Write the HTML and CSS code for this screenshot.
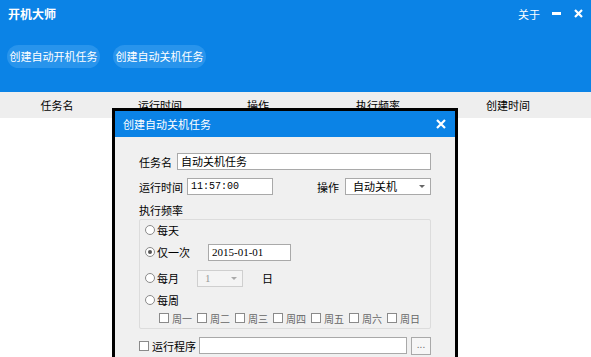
FILE: index.html
```html
<!DOCTYPE html>
<html lang="zh-CN">
<head>
  <meta charset="UTF-8">
  <title>开机大师</title>
  <link rel="stylesheet" href="styles.css">
</head>
<body>

  <!-- top bar -->
  <div class="app-top">
    <div class="title-row">
      <span class="app-name">开机大师</span>
      <div class="win-ctrl">
        <span class="about">关于</span>
        <span class="min-btn"></span>
        <svg class="close-btn" width="9" height="9" viewBox="0 0 9 9"><path d="M1 1L8 8M8 1L1 8" stroke="#fff" stroke-width="2.2"/></svg>
      </div>
    </div>
    <div class="action-row">
      <span class="pill">创建自动开机任务</span>
      <span class="pill">创建自动关机任务</span>
    </div>
  </div>

  <!-- task table header -->
  <div class="table-head">
    <span>任务名</span>
    <span>运行时间</span>
    <span>操作</span>
    <span>执行频率</span>
    <span>创建时间</span>
  </div>

  <!-- dialog -->
  <div class="dialog">
    <div class="dlg-title">
      <span>创建自动关机任务</span>
      <svg class="dlg-close" width="10" height="10" viewBox="0 0 10 10"><path d="M1 1L9 9M9 1L1 9" stroke="#fff" stroke-width="2.2"/></svg>
    </div>
    <div class="dlg-body">
      <div class="row">
        <label class="lbl name-lbl">任务名</label>
        <div class="field name-field">自动关机任务</div>
      </div>
      <div class="row row-time">
        <label class="lbl time-lbl">运行时间</label>
        <div class="field time-field">11:57:00</div>
        <label class="lbl op-lbl">操作</label>
        <div class="field select op-select">自动关机<span class="arrow"></span></div>
      </div>
      <div class="freq-lbl">执行频率</div>
      <div class="group">
        <div class="opt opt-day"><span class="radio"></span>每天</div>
        <div class="opt opt-once"><span class="radio on"></span>仅一次<div class="field date-field">2015-01-01</div></div>
        <div class="opt opt-month"><span class="radio"></span>每月<div class="field select day-select disabled">1<span class="arrow"></span></div><span class="day">日</span></div>
        <div class="opt opt-week"><span class="radio"></span>每周</div>
        <div class="weekdays">
          <span class="wd"><span class="check"></span>周一</span>
          <span class="wd"><span class="check"></span>周二</span>
          <span class="wd"><span class="check"></span>周三</span>
          <span class="wd"><span class="check"></span>周四</span>
          <span class="wd"><span class="check"></span>周五</span>
          <span class="wd"><span class="check"></span>周六</span>
          <span class="wd"><span class="check"></span>周日</span>
        </div>
      </div>
      <div class="row row-prog">
        <span class="check"></span>
        <label class="lbl prog-lbl">运行程序</label>
        <div class="field prog-field"></div>
        <div class="browse">...</div>
      </div>
    </div>
  </div>

</body>
</html>
```

FILE: styles.css
```css
body {
  margin: 0;
  width: 591px;
  height: 357px;
  overflow: hidden;
  background: #fff;
  font-family: "Microsoft YaHei", "Noto Sans CJK SC", sans-serif;
  font-size: 11px;
  color: #000;
  position: relative;
  white-space: nowrap;
}

.app-top {
  height: 92px;
  background: #0b83e6;
  color: #fff;
}

.title-row {
  display: flex;
  justify-content: space-between;
  align-items: center;
  height: 27px;
  padding: 0 8px 0 8px;
}

.app-name {
  font-size: 12px;
  font-weight: bold;
}

.win-ctrl {
  display: flex;
  align-items: center;
}

.about {
  margin-right: 12px;
}

.min-btn {
  width: 9px;
  height: 3px;
  background: #fff;
  margin-right: 13px;
}

.action-row {
  display: flex;
  gap: 13px;
  padding: 18px 0 0 7px;
}

.pill {
  box-sizing: border-box;
  background: #2894ec;
  border-radius: 12px;
  height: 23px;
  line-height: 23px;
  width: 93px;
  text-align: center;
}

.table-head {
  display: grid;
  grid-template-columns: 114px 92px 104px 136px 124px;
  height: 26px;
  line-height: 26px;
  background: #eeeeee;
  text-align: center;
}

.dialog {
  position: absolute;
  left: 112px;
  top: 108px;
  width: 340px;
  height: 246px;
  border: 3px solid #000;
  border-bottom: none;
  background: #f0f0f0;
}

.dlg-title {
  display: flex;
  justify-content: space-between;
  align-items: center;
  height: 26px;
  padding: 0 9px 0 8px;
  background: #0b83e6;
  color: #fff;
}

.dlg-body {
  padding: 16px 24px 0 24px;
}

.row {
  display: flex;
  align-items: center;
  height: 17px;
}

.row-time {
  margin-top: 8px;
}

.lbl {
  flex-shrink: 0;
}

.name-lbl {
  margin-right: 5px;
}

.time-lbl {
  margin-right: 4px;
}

.field {
  box-sizing: border-box;
  flex-shrink: 0;
  height: 17px;
  line-height: 15px;
  background: #fff;
  border: 1px solid #a9a9a9;
  padding: 0 3px;
}

.name-field {
  flex: 1;
}

.time-field {
  width: 86px;
  font-family: "Liberation Mono", monospace;
  font-size: 10px;
}

.op-lbl {
  margin-left: 44px;
  margin-right: 6px;
}

.select {
  position: relative;
  padding-left: 7px;
}

.op-select {
  width: 86px;
}

.arrow {
  position: absolute;
  right: 5px;
  top: 6px;
  border-left: 3px solid transparent;
  border-right: 3px solid transparent;
  border-top: 3px solid #666;
}

.freq-lbl {
  margin-top: 8px;
  height: 16px;
  line-height: 14px;
}

.group {
  box-sizing: border-box;
  height: 110px;
  border: 1px solid #dcdcdc;
  border-radius: 2px;
  padding: 0 0 0 5px;
}

.opt {
  display: flex;
  align-items: center;
}

.opt-day {
  height: 20px;
}

.opt-once {
  height: 24px;
}

.opt-month {
  height: 28px;
}

.opt-week {
  height: 16px;
}

.radio {
  box-sizing: border-box;
  flex-shrink: 0;
  width: 10px;
  height: 10px;
  border: 1px solid #8a8a8a;
  border-radius: 50%;
  background: #fff;
  margin-right: 2px;
  position: relative;
}

.radio.on::after {
  content: "";
  position: absolute;
  left: 2px;
  top: 2px;
  width: 4px;
  height: 4px;
  border-radius: 50%;
  background: #555;
}

.date-field {
  width: 83px;
  margin-left: 18px;
  font-family: "Liberation Serif", serif;
}

.day-select {
  width: 46px;
  margin-left: 18px;
  font-family: "Liberation Serif", serif;
}

.disabled {
  background: #f4f4f4;
  border-color: #cfcfcf;
  color: #999;
}

.disabled .arrow {
  border-top-color: #aaa;
}

.day {
  margin-left: 19px;
}

.weekdays {
  display: flex;
  gap: 5px;
  padding-left: 14px;
  height: 20px;
  align-items: center;
  color: #666;
  font-size: 10px;
}

.wd {
  display: flex;
  align-items: center;
}

.check {
  box-sizing: border-box;
  flex-shrink: 0;
  width: 10px;
  height: 10px;
  border: 1px solid #8a8a8a;
  background: #fff;
  margin-right: 3px;
}

.row-prog {
  margin-top: 8px;
}

.prog-lbl {
  margin-right: 3px;
}

.prog-field {
  width: 208px;
}

.browse {
  box-sizing: border-box;
  flex-shrink: 0;
  width: 20px;
  height: 18px;
  margin-left: 4px;
  border: 1px solid #a9a9a9;
  background: #f6f6f6;
  text-align: center;
  line-height: 12px;
  color: #777;
  font-size: 10px;
}
```
